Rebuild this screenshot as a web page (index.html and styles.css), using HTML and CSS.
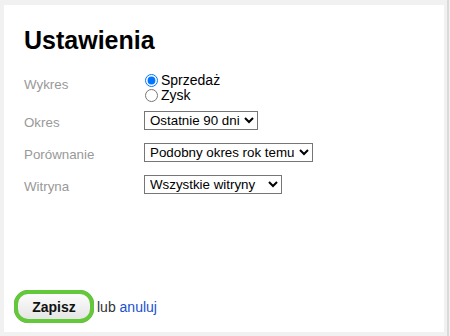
FILE: index.html
```html
<!DOCTYPE html>
<html lang="pl">
<head>
    <meta charset="UTF-8">
    <meta name="viewport" content="width=device-width, initial-scale=1.0">
    <title>Ustawienia</title>
    <link rel="stylesheet" href="styles.css">
</head>
<body>
    <div class="panel">
        <h1>Ustawienia</h1>
        <div class="settings">
            <div class="label label-top">Wykres</div>
            <div class="field radios">
                <label><input type="radio" name="chart" value="sales" checked>Sprzedaż</label>
                <label><input type="radio" name="chart" value="profit">Zysk</label>
            </div>
            <div class="label">Okres</div>
            <div class="field">
                <select name="period">
                    <option>Ostatnie 90 dni</option>
                    <option>Ostatnie 30 dni</option>
                    <option>Ostatnie 7 dni</option>
                </select>
            </div>
            <div class="label">Porównanie</div>
            <div class="field">
                <select name="compare">
                    <option>Podobny okres rok temu</option>
                    <option>Poprzedni okres</option>
                    <option>Brak</option>
                </select>
            </div>
            <div class="label">Witryna</div>
            <div class="field">
                <select name="site" class="site-select">
                    <option>Wszystkie witryny</option>
                    <option>Sklep internetowy</option>
                </select>
            </div>
        </div>
        <div class="actions">
            <button class="save" type="button">Zapisz</button>
            <span class="or">lub <a href="#">anuluj</a></span>
        </div>
    </div>
</body>
</html>
```

FILE: styles.css
```css
html, body {
    height: 100%;
}
body {
    margin: 0;
    padding: 5px 6px 4px 4px;
    box-sizing: border-box;
    background: linear-gradient(to left, #f1f1f1 1px, #dadada 1px, #dadada 3px, #f1f1f1 3px);
    font-family: Arial, "Liberation Sans", sans-serif;
    font-size: 13px;
    color: #000;
}
.panel {
    background-color: #fff;
    height: 100%;
    box-sizing: border-box;
    padding: 21px 20px 9px 20px;
    display: flex;
    flex-direction: column;
}
h1 {
    margin: 0 0 18px 0;
    font-size: 25px;
    font-weight: bold;
    line-height: 29px;
}
.settings {
    display: grid;
    grid-template-columns: 120px auto;
    row-gap: 13px;
    align-items: center;
    font-size: 13.333px;
}
.label {
    color: #999;
    padding-top: 3px;
}
.label-top {
    padding-top: 0;
    padding-bottom: 3px;
}
.radios {
    display: flex;
    flex-direction: column;
    font-size: 14px;
    margin-bottom: -5px;
}
.radios label {
    display: flex;
    align-items: center;
    line-height: 15px;
}
.radios input {
    margin: 0 3px 0 1px;
    width: 13px;
    height: 13px;
}
select {
    font-family: Arial, "Liberation Sans", sans-serif;
    font-size: 13.333px;
    height: 19px;
    padding: 0 1px;
    border: 1px solid #767676;
    border-radius: 0;
    background: #fff;
    color: #000;
}
.site-select {
    width: 138px;
}
.actions {
    margin-top: auto;
    display: flex;
    align-items: center;
}
.save {
    font-family: Arial, "Liberation Sans", sans-serif;
    font-size: 14px;
    font-weight: bold;
    color: #111;
    width: 80px;
    height: 33px;
    margin-left: -10px;
    border: 1px solid #555;
    border-radius: 14px;
    background: linear-gradient(#fff, #e2e2e2);
    outline: 3px solid #63c83a;
    outline-offset: -3px;
    box-shadow: inset 0 0 0 3px #63c83a;
    cursor: pointer;
}
.or {
    margin-left: 3px;
    font-size: 14px;
    color: #333;
}
.or a {
    color: #1a4fd0;
    text-decoration: none;
}
```
